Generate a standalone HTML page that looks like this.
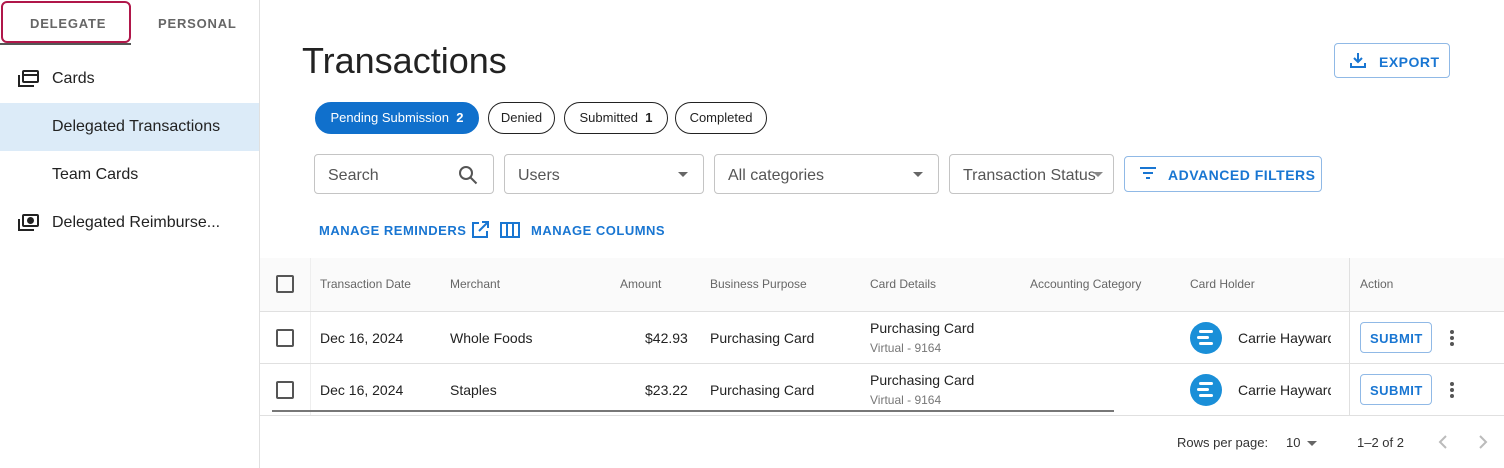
<!DOCTYPE html>
<html><head><meta charset="utf-8"><style>
*{box-sizing:border-box;margin:0;padding:0}
body{width:1504px;height:468px;overflow:hidden;background:#fff;font-family:"Liberation Sans",sans-serif;color:#212121;position:relative}
.a{position:absolute;white-space:nowrap}
.tab{font-size:13px;font-weight:bold;letter-spacing:.8px;color:#666}
.nav{font-size:16px;color:#222}
.pill{position:absolute;top:102px;height:32px;border:1px solid #222;border-radius:16px;font-size:13px;line-height:30px;text-align:center;color:#222}
.inp{position:absolute;top:154px;height:40px;border:1px solid #c4c4c4;border-radius:4px;font-size:16px;line-height:41px;padding-left:13px;color:#555;overflow:hidden}
.tri{position:absolute;top:17px;width:0;height:0;border-left:5px solid transparent;border-right:5px solid transparent;border-top:5px solid #666}
.blue{color:#1976d2;font-weight:bold;font-size:13px;letter-spacing:.5px}
.hd{font-size:12px;color:#666}
.td{font-size:14px;color:#222}
.cb{position:absolute;width:18px;height:18px;border:2px solid #555;border-radius:2px}
.hl{position:absolute;height:1px;background:#e0e0e0}
.btn{position:absolute;border:1px solid #90b9e6;border-radius:4px}
.av{position:absolute;width:32px;height:32px;border-radius:50%;background:#1a8fd8}
.av i{position:absolute;height:3px;background:#fff;border-radius:2px}
.dots{position:absolute;width:4px}
.dots i{display:block;width:4px;height:4px;border-radius:50%;background:#555;margin-bottom:2px}
</style></head><body>
<div class="a" style="left:259px;top:0;width:1px;height:468px;background:#e0e0e0"></div>
<div class="a" style="left:1px;top:1px;width:130px;height:42px;border:2px solid #b0174a;border-radius:6px"></div>
<div class="a" style="left:0;top:43px;width:131px;height:2px;background:#555"></div>
<div class="a tab" style="left:30px;top:16px">DELEGATE</div>
<div class="a tab" style="left:158px;top:16px">PERSONAL</div>
<svg class="a" style="left:17px;top:70px" width="22" height="18" viewBox="0 0 22 18" fill="none" stroke="#222" stroke-width="2"><rect x="6" y="1" width="15" height="11" rx="1"/><line x1="6" y1="5" x2="21" y2="5"/><path d="M2 5v11h15"/></svg>
<div class="a nav" style="left:52px;top:70px">Cards</div>
<div class="a" style="left:0;top:103px;width:259px;height:48px;background:#dcebf8"></div>
<div class="a nav" style="left:52px;top:118px">Delegated Transactions</div>
<div class="a nav" style="left:52px;top:166px">Team Cards</div>
<svg class="a" style="left:17px;top:214px" width="22" height="18" viewBox="0 0 22 18" fill="none" stroke="#222" stroke-width="2"><rect x="6" y="1" width="15" height="11" rx="1"/><circle cx="13.5" cy="6.5" r="2.5" fill="#222"/><path d="M2 5v11h15"/></svg>
<div class="a nav" style="left:52px;top:214px">Delegated Reimburse...</div>
<div class="a" style="left:302px;top:40px;font-size:36px;color:#222">Transactions</div>
<div class="btn" style="left:1334px;top:43px;width:116px;height:35px"></div>
<svg class="a" style="left:1350px;top:52px" width="16" height="16" viewBox="0 0 16 16" fill="none" stroke="#1976d2" stroke-width="2"><path d="M8 1v9M4 6l4 4 4-4M1 11v4h14v-4"/></svg>
<div class="a blue" style="left:1379px;top:54px;font-size:14px">EXPORT</div>
<div class="pill" style="left:315px;width:164px;background:#1070cc;border-color:#1070cc;color:#fff">Pending Submission&nbsp;&nbsp;<b>2</b></div>
<div class="pill" style="left:488px;width:67px">Denied</div>
<div class="pill" style="left:564px;width:104px">Submitted&nbsp;&nbsp;<b>1</b></div>
<div class="pill" style="left:675px;width:92px">Completed</div>
<div class="inp" style="left:314px;width:180px">Search</div>
<svg class="a" style="left:458px;top:165px" width="20" height="20" viewBox="0 0 20 20" fill="none" stroke="#555" stroke-width="2"><circle cx="8" cy="8" r="6"/><path d="M12.5 12.5l6 6"/></svg>
<div class="inp" style="left:504px;width:200px">Users<div class="tri" style="left:173px"></div></div>
<div class="inp" style="left:714px;width:225px">All categories<div class="tri" style="left:198px"></div></div>
<div class="inp" style="left:949px;width:165px">Transaction Status<div class="tri" style="left:143px;border-top-color:#888"></div></div>
<div class="btn" style="left:1124px;top:156px;width:198px;height:36px"></div>
<svg class="a" style="left:1139px;top:166px" width="18" height="14" viewBox="0 0 18 14" stroke="#1976d2" stroke-width="2"><path d="M1 2h16M4 7h10M7 12h4"/></svg>
<div class="a blue" style="left:1168px;top:167px;font-size:14px">ADVANCED FILTERS</div>
<div class="a blue" style="left:319px;top:223px">MANAGE REMINDERS</div>
<svg class="a" style="left:471px;top:221px" width="18" height="18" viewBox="0 0 18 18" fill="none" stroke="#1976d2" stroke-width="2"><path d="M8 2H2v14h14v-6M11 1h6v6M17 1L8 10"/></svg>
<svg class="a" style="left:500px;top:221px" width="20" height="18" viewBox="0 0 20 18" fill="none" stroke="#1976d2" stroke-width="2"><rect x="1" y="2" width="18" height="14"/><path d="M7 2v14M13 2v14"/></svg>
<div class="a blue" style="left:531px;top:223px">MANAGE COLUMNS</div>
<div class="a" style="left:260px;top:258px;width:1244px;height:54px;background:#fafafa"></div>
<div class="a" style="left:310px;top:258px;width:1px;height:158px;background:#eee"></div>
<div class="a" style="left:1349px;top:258px;width:1px;height:158px;background:#e0e0e0"></div>
<div class="hl" style="left:260px;top:311px;width:1244px"></div>
<div class="hl" style="left:260px;top:363px;width:1244px"></div>
<div class="hl" style="left:260px;top:415px;width:1244px"></div>
<div class="a" style="left:272px;top:410px;width:842px;height:2px;background:#777"></div>
<div class="cb" style="left:276px;top:275px"></div>
<div class="cb" style="left:276px;top:329px"></div>
<div class="cb" style="left:276px;top:381px"></div>
<div class="a hd" style="left:320px;top:277px">Transaction Date</div>
<div class="a hd" style="left:450px;top:277px">Merchant</div>
<div class="a hd" style="left:620px;top:277px">Amount</div>
<div class="a hd" style="left:710px;top:277px">Business Purpose</div>
<div class="a hd" style="left:870px;top:277px">Card Details</div>
<div class="a hd" style="left:1030px;top:277px">Accounting Category</div>
<div class="a hd" style="left:1190px;top:277px">Card Holder</div>
<div class="a hd" style="left:1360px;top:277px">Action</div>
<div class="a td" style="left:320px;top:330px">Dec 16, 2024</div>
<div class="a td" style="left:450px;top:330px">Whole Foods</div>
<div class="a td" style="left:645px;top:330px">$42.93</div>
<div class="a td" style="left:710px;top:330px">Purchasing Card</div>
<div class="a td" style="left:870px;top:320px">Purchasing Card</div>
<div class="a" style="left:870px;top:341px;font-size:12px;color:#777">Virtual - 9164</div>
<div class="a td" style="left:320px;top:382px">Dec 16, 2024</div>
<div class="a td" style="left:450px;top:382px">Staples</div>
<div class="a td" style="left:645px;top:382px">$23.22</div>
<div class="a td" style="left:710px;top:382px">Purchasing Card</div>
<div class="a td" style="left:870px;top:372px">Purchasing Card</div>
<div class="a" style="left:870px;top:393px;font-size:12px;color:#777">Virtual - 9164</div>
<div class="av" style="left:1190px;top:322px"><i style="left:9px;top:8px;width:14px"></i><i style="left:7px;top:14px;width:12px"></i><i style="left:9px;top:20px;width:14px"></i></div>
<div class="av" style="left:1190px;top:374px"><i style="left:9px;top:8px;width:14px"></i><i style="left:7px;top:14px;width:12px"></i><i style="left:9px;top:20px;width:14px"></i></div>
<div class="a td" style="left:1238px;top:330px;width:93px;overflow:hidden">Carrie Hayward</div>
<div class="a td" style="left:1238px;top:382px;width:93px;overflow:hidden">Carrie Hayward</div>
<div class="btn" style="left:1360px;top:322px;width:72px;height:31px"></div>
<div class="btn" style="left:1360px;top:374px;width:72px;height:31px"></div>
<div class="a blue" style="left:1370px;top:331px">SUBMIT</div>
<div class="a blue" style="left:1370px;top:383px">SUBMIT</div>
<div class="dots" style="left:1450px;top:330px"><i></i><i></i><i></i></div>
<div class="dots" style="left:1450px;top:382px"><i></i><i></i><i></i></div>
<div class="a" style="left:1177px;top:435px;font-size:13px;color:#333">Rows per page:</div>
<div class="a" style="left:1286px;top:435px;font-size:13px;color:#333">10</div>
<div class="a" style="left:1307px;top:441px;border-left:5px solid transparent;border-right:5px solid transparent;border-top:5px solid #666"></div>
<div class="a" style="left:1357px;top:435px;font-size:13px;color:#333">1–2 of 2</div>
<svg class="a" style="left:1437px;top:434px" width="12" height="16" viewBox="0 0 12 16" fill="none" stroke="#bbb" stroke-width="2"><path d="M9 2L3 8l6 6"/></svg>
<svg class="a" style="left:1477px;top:434px" width="12" height="16" viewBox="0 0 12 16" fill="none" stroke="#bbb" stroke-width="2"><path d="M3 2l6 6-6 6"/></svg>
</body></html>
